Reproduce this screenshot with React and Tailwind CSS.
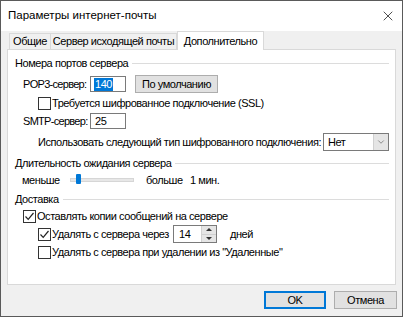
import { X, ChevronDown } from 'lucide-react';

const font = { fontFamily: '"Liberation Sans", Arial, sans-serif' };

const CheckBox = ({ checked }) => (
  <span className="w-[13px] h-[13px] border border-[#333333] bg-white flex items-center justify-center shrink-0">
    {checked && (
      <svg width="11" height="11" viewBox="0 0 11 11">
        <path d="M1.5 5.5 L4.2 8.3 L9.5 2" fill="none" stroke="#222" strokeWidth="1.2" />
      </svg>
    )}
  </span>
);

const GroupHeader = ({ title }) => (
  <div className="h-[14px] flex items-center gap-[4px]">
    <span className="leading-none">{title}</span>
    <span className="flex-1 h-px bg-[#dcdcdc] mr-[6px]" />
  </div>
);

export default function App() {
  return (
    <div
      className="w-[403px] h-[317px] border border-[#5a5a5a] bg-[#f0f0f0] flex flex-col text-[11px] tracking-[-0.45px] text-black whitespace-nowrap"
      style={font}
    >
      {/* Title bar */}
      <div className="h-[30px] bg-white flex items-center justify-between pl-[7px] pr-[6px]">
        <span className="text-[11.5px] tracking-normal">Параметры интернет-почты</span>
        <X className="w-[16px] h-[16px] text-[#222]" strokeWidth={1.2} />
      </div>

      {/* Tabs */}
      <div className="h-[18px] ml-[8px] flex items-end">
        <div className="w-[42px] h-[16px] shrink-0 border border-b-0 border-[#d9d9d9] flex items-center justify-center leading-none">
          Общие
        </div>
        <div className="w-[126px] h-[16px] shrink-0 border border-l-0 border-b-0 border-[#d9d9d9] flex items-center justify-center leading-none">
          Сервер исходящей почты
        </div>
        <div className="w-[87px] h-[19px] shrink-0 -mb-px relative z-10 bg-white border border-b-0 border-[#d9d9d9] flex items-center justify-center leading-none">
          Дополнительно
        </div>
      </div>

      {/* Panel */}
      <div className="ml-[6px] w-[389px] h-[236px] bg-white border border-[#d9d9d9] flex flex-col pl-[7px] pt-[6px]">
        <GroupHeader title="Номера портов сервера" />

        <div className="mt-[5px] h-[18px] flex items-center pl-[8px]">
          <span className="w-[67px] shrink-0 leading-none tracking-[-0.7px]">POP3-сервер:</span>
          <span className="w-[36px] h-[16px] shrink-0 border border-[#7a7a7a] flex items-center pl-[3px]">
            <span className="bg-[#0078d7] text-white leading-[13px] px-px">140</span>
          </span>
          <span className="ml-[9px] w-[83px] h-[18px] shrink-0 bg-[#e1e1e1] border border-[#adadad] flex items-center justify-center leading-none">
            По умолчанию
          </span>
        </div>

        <div className="mt-[3px] h-[14px] flex items-center gap-[1px] pl-[23px]">
          <CheckBox />
          <span className="leading-none">Требуется шифрованное подключение (SSL)</span>
        </div>

        <div className="mt-[3px] h-[16px] flex items-center pl-[8px]">
          <span className="w-[67px] shrink-0 leading-none tracking-[-0.7px]">SMTP-сервер:</span>
          <span className="w-[36px] h-[16px] shrink-0 border border-[#7a7a7a] flex items-center pl-[4px] leading-none">
            25
          </span>
        </div>

        <div className="mt-[4px] h-[18px] flex items-center pl-[23px]">
          <span className="leading-none flex-1">Использовать следующий тип шифрованного подключения:</span>
          <span className="w-[66px] h-[18px] shrink-0 mr-[6px] border border-[#7a7a7a] flex items-center">
            <span className="flex-1 pl-[4px] leading-none">Нет</span>
            <span className="w-[15px] h-full bg-[#e5e5e5] border-l border-[#d0d0d0] flex items-center justify-center">
              <ChevronDown className="w-[10px] h-[10px] text-[#555]" strokeWidth={1.5} />
            </span>
          </span>
        </div>

        <div className="mt-[5px]">
          <GroupHeader title="Длительность ожидания сервера" />
        </div>

        <div className="mt-[3px] h-[14px] flex items-center pl-[7px]">
          <span className="w-[48px] shrink-0 leading-none">меньше</span>
          <span className="w-[64px] h-[4px] shrink-0 bg-[#e7e7e7] border border-[#d6d6d6] relative">
            <span className="absolute left-[5px] top-[-5px] w-[5px] h-[10px] bg-[#0078d7] rounded-[1px]" />
          </span>
          <span className="ml-[12px] w-[44px] shrink-0 leading-none">больше</span>
          <span className="leading-none">1 мин.</span>
        </div>

        <div className="mt-[5px]">
          <GroupHeader title="Доставка" />
        </div>

        <div className="mt-[3px] h-[14px] flex items-center gap-[1px] pl-[8px]">
          <CheckBox checked />
          <span className="leading-none">Оставлять копии сообщений на сервере</span>
        </div>

        <div className="mt-[2px] h-[18px] flex items-center pl-[23px]">
          <CheckBox checked />
          <span className="ml-[1px] w-[121px] shrink-0 leading-none">Удалять с сервера через</span>
          <span className="w-[44px] h-[18px] shrink-0 border border-[#7a7a7a] flex items-center">
            <span className="flex-1 pl-[5px] leading-none">14</span>
            <span className="w-[15px] h-full flex flex-col border-l border-[#d0d0d0]">
              <span className="flex-1 bg-[#e5e5e5] border-b border-[#d0d0d0] flex items-center justify-center">
                <span className="w-0 h-0 border-l-[3px] border-r-[3px] border-b-[3px] border-l-transparent border-r-transparent border-b-[#333]" />
              </span>
              <span className="flex-1 bg-[#e5e5e5] flex items-center justify-center">
                <span className="w-0 h-0 border-l-[3px] border-r-[3px] border-t-[3px] border-l-transparent border-r-transparent border-t-[#333]" />
              </span>
            </span>
          </span>
          <span className="ml-[13px] leading-none">дней</span>
        </div>

        <div className="mt-[2px] h-[14px] flex items-center gap-[1px] pl-[23px]">
          <CheckBox />
          <span className="leading-none">Удалять с сервера при удалении из "Удаленные"</span>
        </div>
      </div>

      {/* Buttons */}
      <div className="mt-[6px] flex justify-end gap-[8px] pr-[5px]">
        <span className="w-[62px] h-[18px] bg-[#e1e1e1] border-2 border-[#0078d7] flex items-center justify-center leading-none">
          OK
        </span>
        <span className="w-[63px] h-[18px] bg-[#e1e1e1] border border-[#adadad] flex items-center justify-center leading-none">
          Отмена
        </span>
      </div>
    </div>
  );
}
